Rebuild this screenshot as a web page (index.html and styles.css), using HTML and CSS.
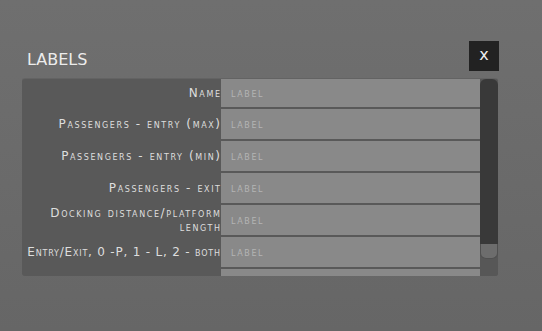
FILE: index.html
```html
<!DOCTYPE html>
<html lang="en">
<head>
	<meta charset="utf-8">
	<meta name="viewport" content="width=device-width, initial-scale=1">
	<title>Labels</title>
	<link rel="stylesheet" href="styles.css">
</head>
<body>
	<div class="dialog">
		<div class="head">
			<h2>LABELS</h2>
			<a class="close">x</a>
		</div>
		<div class="panel">
			<div class="list">
				<div class="row first"><label>Name</label><input type="text" placeholder="label"></div>
				<div class="row"><label>Passengers - entry (max)</label><input type="text" placeholder="label"></div>
				<div class="row"><label>Passengers - entry (min)</label><input type="text" placeholder="label"></div>
				<div class="row"><label>Passengers - exit</label><input type="text" placeholder="label"></div>
				<div class="row"><label>Docking distance/platform length</label><input type="text" placeholder="label"></div>
				<div class="row"><label class="tight">Entry/Exit, 0 -P, 1 - L, 2 - both</label><input type="text" placeholder="label"></div>
				<div class="row"><label></label><input type="text"></div>
			</div>
			<div class="scroll">
				<div class="thumb"></div>
				<div class="handle"></div>
			</div>
		</div>
	</div>
</body>
</html>
```

FILE: styles.css
```css
html,body{height:100%;}
body{margin:0;padding:0;background:linear-gradient(#6f6f6f,#666);font-family:"DejaVu Sans",sans-serif;overflow:hidden;}

.dialog{width:476px;margin:41px 0 0 22px;}
.head{display:flex;justify-content:space-between;align-items:flex-end;height:30px;margin-bottom:8px;margin-right:-1px;}
.head h2{margin:0 0 3px 5px;font-size:16px;font-weight:normal;color:#ececec;line-height:1;}
.close{width:30px;height:30px;background-color:#222;color:#eee;font-size:16px;line-height:28px;text-align:center;}

.panel{display:flex;height:197px;background-color:#595959;border-radius:3px;overflow:hidden;box-shadow:0 -1px 0 #636363;}
.list{flex:1;display:flex;flex-direction:column;gap:2px;overflow:hidden;}
.row{display:grid;grid-template-columns:198px 1fr;column-gap:1px;height:30px;flex:none;}
.row.first{height:28px;}
.row label{display:flex;align-items:center;justify-content:flex-end;text-align:right;font-variant:small-caps;font-size:12px;line-height:14px;letter-spacing:1.6px;color:#dedede;padding-left:2px;margin-right:-1.6px;}
.row label.tight{letter-spacing:.8px;margin-right:-.8px;}
.row input{border:0;margin:0;padding:0 10px;background-color:#898989;font-family:inherit;font-variant:small-caps;font-size:12px;letter-spacing:1.6px;color:#b4b4b4;outline:none;min-width:0;}
.row input::placeholder{color:#b4b4b4;opacity:1;}

.scroll{width:18px;display:flex;flex-direction:column;background-color:#575757;}
.thumb{height:165px;background-color:#393939;border-radius:6px 6px 0 0;}
.handle{height:14px;background-color:#6d6d6d;border:1px solid #505050;border-top:0;border-radius:0 0 6px 6px;}
```
